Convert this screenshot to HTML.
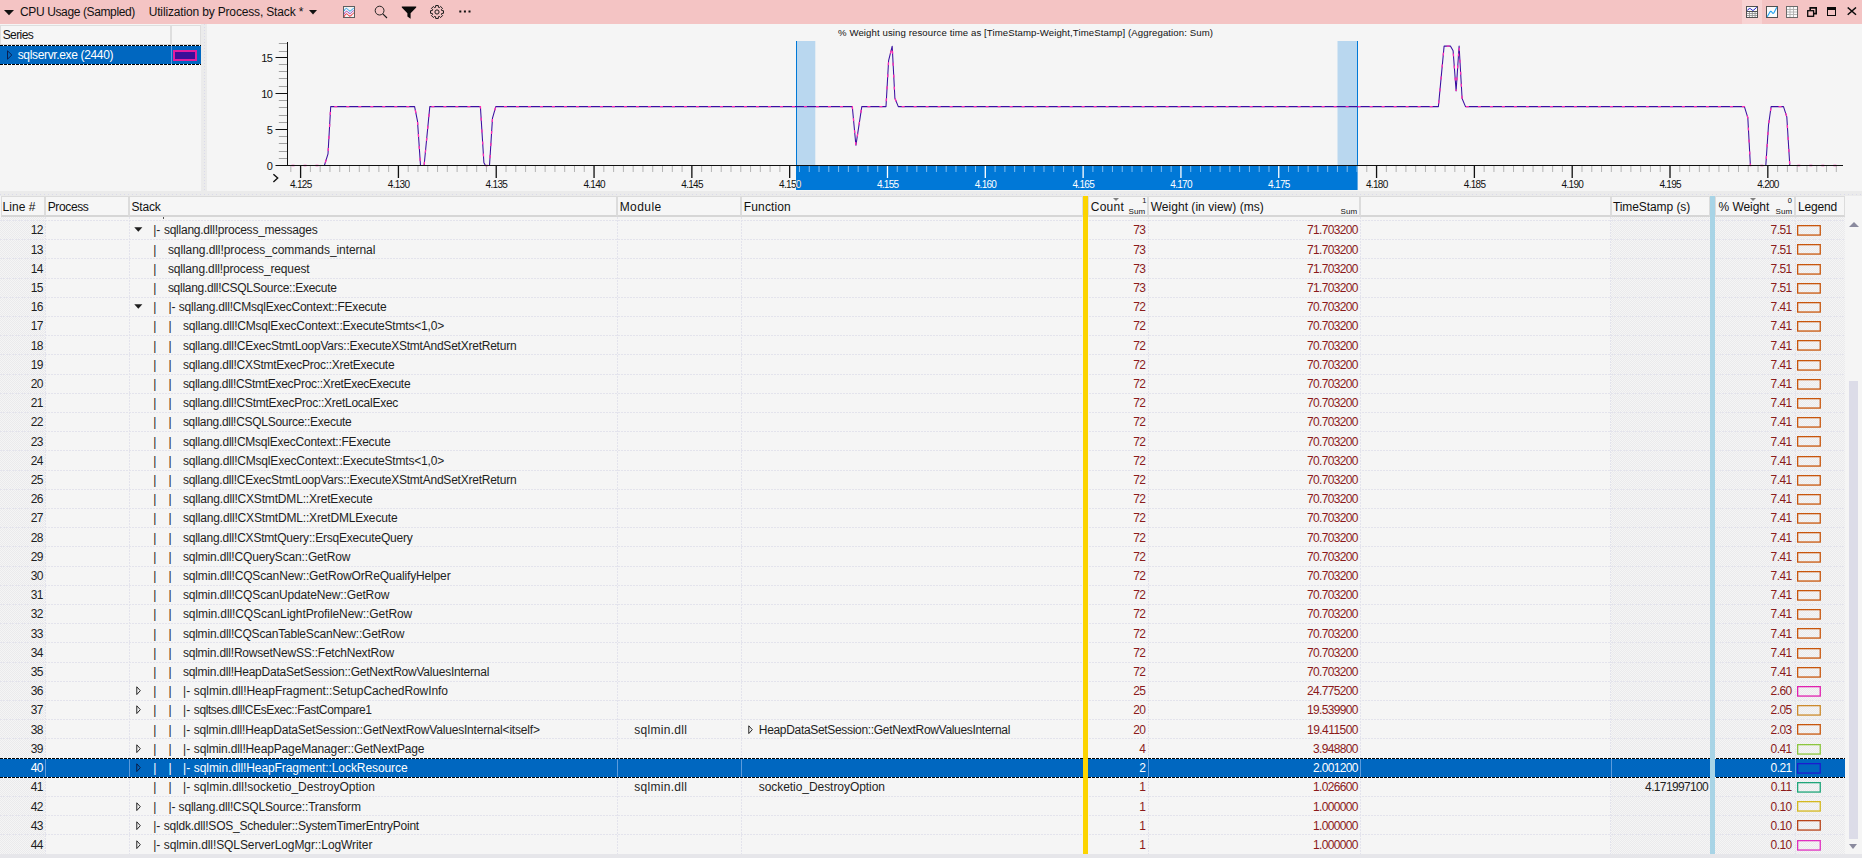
<!DOCTYPE html>
<html><head><meta charset="utf-8"><title>CPU Usage (Sampled)</title>
<style>
html,body{margin:0;padding:0}
body{width:1862px;height:858px;overflow:hidden;position:relative;background:#f5f5f5;font-family:"Liberation Sans",sans-serif;font-size:12px;color:#1e1e1e}
.abs{position:absolute}
i{display:block;font-style:normal}
#titlebar{position:absolute;left:0;top:0;width:1862px;height:24px;background:#f4c4c4}
#titlebar span{position:absolute;top:5px;font-size:12px;line-height:14px;white-space:pre;color:#111}
#titlebar svg{position:absolute}
#series{position:absolute;left:0;top:24px;width:201px;height:167px;background:#f5f5f5}
.shdr{position:absolute;top:1px;height:20px;background:#f6f6f6;border:1px solid #dedede;border-bottom:1px solid #d6d6d6;box-sizing:border-box}
#splitter{position:absolute;left:201px;top:24px;width:6px;height:167px;background:#ebebeb}
#hsplit{position:absolute;left:0;top:191px;width:1862px;height:5px;background:#ebebeb}
#thead{position:absolute;left:0;top:0;width:1862px;height:0}
.th{position:absolute;top:196px;height:21px;box-sizing:border-box;border:1px solid #dcdcdc;border-bottom:2px solid #d6d6d6;background:#f6f6f6}
.ht{position:absolute;top:200px;font-size:12px;line-height:14px;white-space:pre;color:#111}
.sum{position:absolute;top:206.5px;font-size:8px;line-height:9px;white-space:pre;color:#111}
.sidx{position:absolute;top:196.5px;font-size:7.5px;line-height:8px;color:#111}
.sarr{position:absolute;top:198.3px;width:0;height:0;border-left:3.7px solid transparent;border-right:3.7px solid transparent;border-top:3.4px solid #808080}
.row{position:absolute;left:0;width:1846px;height:19px}
.row.sel{background:#0067c0;left:0;width:1846px;height:20px}
.dl{position:absolute;left:0;width:100%;height:1px;background:repeating-linear-gradient(90deg,#000 0 3px,#fff 3px 4px)}
.row.sel .c{color:#fff !important;top:1px}
.row.sel .ex{top:5px}

.sv{position:absolute;top:1px;height:18px;width:1px;background:#5c9bdc}
.c{position:absolute;top:1px;line-height:19px;white-space:pre;font-size:12px}
.ln{color:#1e1e1e}
.st{color:#1e1e1e}
.num{color:#8b1a1a}
.lg{position:absolute;left:1797px;top:5px}
.ex{position:absolute;left:134.2px;top:5px;width:9px;height:9px}
.ex2{position:absolute;left:746.3px;top:5px;width:9px;height:9px}
.hl{position:absolute;left:0;width:1846px;height:1px;background:repeating-linear-gradient(90deg,#e3e3ec 0 2px,transparent 2px 3px)}
.vl{position:absolute;top:217px;height:637px;width:1px;background:repeating-linear-gradient(180deg,#e3e3ec 0 2px,transparent 2px 3px)}
.hatch{position:absolute;top:217px;height:637px;background:#eeeeee;background-image:conic-gradient(#eaeaec 25%,#f5f5f5 0 50%,#eaeaec 0 75%,#f5f5f5 0);background-size:2px 2px}
</style></head><body>

<div id="titlebar">
<svg style="left:4px;top:9.5px" width="10" height="6" viewBox="0 0 10 6"><path d="M0 0 L10 0 L5 5.2 Z" fill="#111"/></svg>
<span style="left:20.0px;letter-spacing:-0.376px">CPU Usage (Sampled)</span>
<span style="left:148.7px;letter-spacing:-0.158px">Utilization by Process, Stack *</span>
<svg style="left:309.3px;top:10px" width="8" height="5" viewBox="0 0 8 5"><path d="M0 0 L8 0 L4 4.4 Z" fill="#111"/></svg>
<svg style="left:343px;top:6px" width="12" height="12" viewBox="0 0 12 12"><rect x="0.5" y="0.5" width="11" height="11" fill="#f2f2f2" stroke="#5e5e5e"/><path d="M1.2 5 C2.2 2.2 3.6 1.6 5 3.6 S7.4 5.6 8.6 4 S10.2 2.6 10.8 2.4" fill="none" stroke="#1ea0f0" stroke-width="1"/><path d="M1.2 8.4 C2.2 5.2 3.6 4.6 5 6.2 S7.4 8 8.6 6.4 S10.2 4.8 10.8 4.6" fill="none" stroke="#a040c0" stroke-width="1"/><path d="M1.2 10.8 C2.2 7.8 3.6 7 5 8.8 S7.4 10.6 8.6 9 S10.2 7.2 10.8 7" fill="none" stroke="#f01020" stroke-width="1"/></svg>
<svg style="left:374px;top:5px" width="14" height="14" viewBox="0 0 14 14"><circle cx="5.6" cy="5.6" r="4.4" fill="none" stroke="#1a1a1a" stroke-width="0.95"/><path d="M8.8 8.8 L13 13" stroke="#1a1a1a" stroke-width="1.1" fill="none"/></svg>
<svg style="left:401px;top:6px" width="16" height="13" viewBox="0 0 16 13"><path d="M0.8 0.4 L15.2 0.4 L15.2 1.5 L9.6 7.2 L9.6 12.8 L6.4 10.4 L6.4 7.2 L0.8 1.5 Z" fill="#0a0a0a"/></svg>
<svg style="left:430px;top:4.8px" width="14" height="14" viewBox="0 0 14 14"><g fill="none" stroke="#1a1a1a" stroke-width="1" stroke-linejoin="round"><circle cx="7" cy="7" r="2.1"/><path d="M5.55 2.32 L5.69 0.53 L8.31 0.53 L8.45 2.32 L9.29 2.67 L10.65 1.50 L12.50 3.35 L11.33 4.71 L11.68 5.55 L13.47 5.69 L13.47 8.31 L11.68 8.45 L11.33 9.29 L12.50 10.65 L10.65 12.50 L9.29 11.33 L8.45 11.68 L8.31 13.47 L5.69 13.47 L5.55 11.68 L4.71 11.33 L3.35 12.50 L1.50 10.65 L2.67 9.29 L2.32 8.45 L0.53 8.31 L0.53 5.69 L2.32 5.55 L2.67 4.71 L1.50 3.35 L3.35 1.50 L4.71 2.67 Z"/></g></svg>
<svg style="left:459px;top:10.2px" width="13" height="3" viewBox="0 0 13 3"><rect x="0.3" y="0.5" width="2" height="2" fill="#111"/><rect x="4.9" y="0.5" width="2" height="2" fill="#111"/><rect x="9.5" y="0.5" width="2" height="2" fill="#111"/></svg>
<div class="abs" style="left:1742px;top:0;width:20px;height:24px;background:#f8d3d3"></div>
<svg style="left:1746px;top:6px" width="12" height="12" viewBox="0 0 12 12"><rect x="0.5" y="0.5" width="11" height="11" fill="#fafafa" stroke="#505050"/><path d="M1 7.5 H11 M1 9.5 H11 M3.5 5.5 V11 M6.3 5.5 V11 M9.1 5.5 V11" stroke="#8a8a8a" stroke-width="0.8" fill="none"/><path d="M1 5.5 H11" stroke="#505050" stroke-width="1"/><path d="M1.2 4.4 L3.2 2.7 Q4 2.2 4.8 2.9 L6.2 4.2 Q7 4.7 7.8 4 L10.8 1.2" fill="none" stroke="#2424cc" stroke-width="1"/></svg>
<svg style="left:1766px;top:6px" width="12" height="12" viewBox="0 0 12 12"><rect x="0.5" y="0.5" width="11" height="11" fill="#fafafa" stroke="#505050"/><path d="M1.2 10.8 L3.8 6.2 Q4.8 4.6 5.8 6 L6.4 6.9 Q7.3 8 8.1 6.4 L10.8 1.2" fill="none" stroke="#1ea0f0" stroke-width="1.1"/></svg>
<svg style="left:1786px;top:6px" width="12" height="12" viewBox="0 0 12 12"><rect x="0.5" y="0.5" width="11" height="11" fill="#fafafa" stroke="#6a6a6a"/><path d="M1 3.5 H11 M1 6 H11 M1 8.5 H11 M4 1 V11 M7.5 1 V11" stroke="#b0b0b0" stroke-width="0.9" fill="none"/></svg>
<svg style="left:1807px;top:7px" width="10" height="10" viewBox="0 0 10 10"><path d="M3.2 3 V0.9 H9.2 V6.6 H7" fill="none" stroke="#0a0a0a" stroke-width="1.6"/><rect x="0.7" y="3.7" width="5.9" height="5.6" fill="none" stroke="#0a0a0a" stroke-width="1.3"/></svg>
<svg style="left:1827px;top:7px" width="10" height="9" viewBox="0 0 10 9" shape-rendering="crispEdges"><rect x="0.5" y="0.5" width="8" height="8" fill="none" stroke="#0a0a0a" stroke-width="1"/><rect x="0" y="0" width="9" height="2.6" fill="#0a0a0a"/></svg>
<svg style="left:1847px;top:7px" width="10" height="9" viewBox="0 0 10 9"><path d="M0.7 0.5 L9 7.7 M9 0.5 L0.7 7.7" stroke="#0a0a0a" stroke-width="1.5" fill="none"/></svg>

</div>

<div id="series">
<div class="shdr" style="left:0;width:171px"></div>
<div class="shdr" style="left:171px;width:30px"></div>
<span class="abs" style="top:4px;font-size:12px;line-height:14px;color:#111;white-space:pre;left:2.7px;letter-spacing:-0.586px">Series</span>
<div class="abs" id="ssel" style="left:0;top:21px;width:201px;height:20px;background:#0067c0"><i class="dl" style="top:0"></i><i class="dl" style="top:19px"></i>
<svg class="abs" style="left:7px;top:5px" width="6" height="10" viewBox="0 0 6 10"><path d="M0.5 0.8 L4.8 5 L0.5 9.2 Z" fill="none" stroke="#0a1e50" stroke-width="1"/></svg>
<span class="abs" style="top:2.5px;color:#fff;font-size:12px;line-height:14px;white-space:pre;left:17.7px;letter-spacing:-0.345px">sqlservr.exe (2440)</span>
<div class="abs" style="left:170.5px;top:1px;width:1px;height:18px;background:#5c9bdc"></div>
<div class="abs" style="left:173px;top:5px;width:24px;height:11px;box-sizing:border-box;border:2px solid #e31ca0;background:#3b0f99"></div>
</div>
</div>
<div id="splitter"><i class="abs" style="left:3px;top:0;width:1px;height:167px;background:repeating-linear-gradient(180deg,#dadaea 0 1px,transparent 1px 3px)"></i></div>
<div id="hsplit"><i class="abs" style="left:0;top:3px;width:1862px;height:1px;background:repeating-linear-gradient(90deg,#dadaea 0 1px,transparent 1px 4px)"></i></div>

<svg id="chart" class="abs" style="left:0;top:0" width="1862" height="192" viewBox="0 0 1862 192" font-family="Liberation Sans, sans-serif">
<rect x="797" y="41" width="18.3" height="125" fill="#b9d7ef"/>
<rect x="1337.5" y="41" width="19.5" height="125" fill="#b9d7ef"/>
<rect x="796" y="166" width="561.6" height="24" fill="#0078d7"/>
<rect x="796" y="41" width="1" height="125" fill="#0078d7"/>
<rect x="1357" y="41" width="1" height="125" fill="#0078d7"/>
<rect x="275.5" y="165" width="12" height="1" fill="#111"/>
<rect x="278.8" y="158" width="8.5" height="1" fill="#a2a2a2"/>
<rect x="278.8" y="151" width="8.5" height="1" fill="#a2a2a2"/>
<rect x="278.8" y="143" width="8.5" height="1" fill="#a2a2a2"/>
<rect x="278.8" y="136" width="8.5" height="1" fill="#a2a2a2"/>
<rect x="275.5" y="129" width="12" height="1" fill="#111"/>
<rect x="278.8" y="122" width="8.5" height="1" fill="#a2a2a2"/>
<rect x="278.8" y="115" width="8.5" height="1" fill="#a2a2a2"/>
<rect x="278.8" y="107" width="8.5" height="1" fill="#a2a2a2"/>
<rect x="278.8" y="100" width="8.5" height="1" fill="#a2a2a2"/>
<rect x="275.5" y="93" width="12" height="1" fill="#111"/>
<rect x="278.8" y="86" width="8.5" height="1" fill="#a2a2a2"/>
<rect x="278.8" y="78" width="8.5" height="1" fill="#a2a2a2"/>
<rect x="278.8" y="71" width="8.5" height="1" fill="#a2a2a2"/>
<rect x="278.8" y="64" width="8.5" height="1" fill="#a2a2a2"/>
<rect x="275.5" y="57" width="12" height="1" fill="#111"/>
<rect x="278.8" y="51" width="8.5" height="1" fill="#a2a2a2"/>
<rect x="278.8" y="43" width="8.5" height="1" fill="#a2a2a2"/>
<text x="266.8" y="170.4" font-size="11" fill="#111">0</text>
<text x="266.8" y="134.3" font-size="11" fill="#111">5</text>
<text x="261.2" y="98.3" font-size="11" textLength="11.6" lengthAdjust="spacing" fill="#111">10</text>
<text x="261.2" y="62.2" font-size="11" textLength="11.6" lengthAdjust="spacing" fill="#111">15</text>
<rect x="290.32" y="166" width="1" height="6" fill="#b4b4b4"/>
<rect x="299.95" y="166" width="1.3" height="12" fill="#111"/>
<text x="301.1" y="188.3" font-size="10" text-anchor="middle" textLength="22.2" lengthAdjust="spacing" fill="#111">4.125</text>
<rect x="309.88" y="166" width="1" height="6" fill="#b4b4b4"/>
<rect x="319.66" y="166" width="1" height="6" fill="#b4b4b4"/>
<rect x="329.44" y="166" width="1" height="6" fill="#b4b4b4"/>
<rect x="339.23" y="166" width="1" height="6" fill="#b4b4b4"/>
<rect x="349.01" y="166" width="1" height="6" fill="#b4b4b4"/>
<rect x="358.79" y="166" width="1" height="6" fill="#b4b4b4"/>
<rect x="368.57" y="166" width="1" height="6" fill="#b4b4b4"/>
<rect x="378.35" y="166" width="1" height="6" fill="#b4b4b4"/>
<rect x="388.13" y="166" width="1" height="6" fill="#b4b4b4"/>
<rect x="397.77" y="166" width="1.3" height="12" fill="#111"/>
<text x="398.9" y="188.3" font-size="10" text-anchor="middle" textLength="22.2" lengthAdjust="spacing" fill="#111">4.130</text>
<rect x="407.70" y="166" width="1" height="6" fill="#b4b4b4"/>
<rect x="417.48" y="166" width="1" height="6" fill="#b4b4b4"/>
<rect x="427.26" y="166" width="1" height="6" fill="#b4b4b4"/>
<rect x="437.04" y="166" width="1" height="6" fill="#b4b4b4"/>
<rect x="446.82" y="166" width="1" height="6" fill="#b4b4b4"/>
<rect x="456.60" y="166" width="1" height="6" fill="#b4b4b4"/>
<rect x="466.39" y="166" width="1" height="6" fill="#b4b4b4"/>
<rect x="476.17" y="166" width="1" height="6" fill="#b4b4b4"/>
<rect x="485.95" y="166" width="1" height="6" fill="#b4b4b4"/>
<rect x="495.58" y="166" width="1.3" height="12" fill="#111"/>
<text x="496.7" y="188.3" font-size="10" text-anchor="middle" textLength="22.2" lengthAdjust="spacing" fill="#111">4.135</text>
<rect x="505.51" y="166" width="1" height="6" fill="#b4b4b4"/>
<rect x="515.29" y="166" width="1" height="6" fill="#b4b4b4"/>
<rect x="525.07" y="166" width="1" height="6" fill="#b4b4b4"/>
<rect x="534.86" y="166" width="1" height="6" fill="#b4b4b4"/>
<rect x="544.64" y="166" width="1" height="6" fill="#b4b4b4"/>
<rect x="554.42" y="166" width="1" height="6" fill="#b4b4b4"/>
<rect x="564.20" y="166" width="1" height="6" fill="#b4b4b4"/>
<rect x="573.98" y="166" width="1" height="6" fill="#b4b4b4"/>
<rect x="583.76" y="166" width="1" height="6" fill="#b4b4b4"/>
<rect x="593.40" y="166" width="1.3" height="12" fill="#111"/>
<text x="594.5" y="188.3" font-size="10" text-anchor="middle" textLength="22.2" lengthAdjust="spacing" fill="#111">4.140</text>
<rect x="603.33" y="166" width="1" height="6" fill="#b4b4b4"/>
<rect x="613.11" y="166" width="1" height="6" fill="#b4b4b4"/>
<rect x="622.89" y="166" width="1" height="6" fill="#b4b4b4"/>
<rect x="632.67" y="166" width="1" height="6" fill="#b4b4b4"/>
<rect x="642.45" y="166" width="1" height="6" fill="#b4b4b4"/>
<rect x="652.23" y="166" width="1" height="6" fill="#b4b4b4"/>
<rect x="662.02" y="166" width="1" height="6" fill="#b4b4b4"/>
<rect x="671.80" y="166" width="1" height="6" fill="#b4b4b4"/>
<rect x="681.58" y="166" width="1" height="6" fill="#b4b4b4"/>
<rect x="691.21" y="166" width="1.3" height="12" fill="#111"/>
<text x="692.4" y="188.3" font-size="10" text-anchor="middle" textLength="22.2" lengthAdjust="spacing" fill="#111">4.145</text>
<rect x="701.14" y="166" width="1" height="6" fill="#b4b4b4"/>
<rect x="710.92" y="166" width="1" height="6" fill="#b4b4b4"/>
<rect x="720.70" y="166" width="1" height="6" fill="#b4b4b4"/>
<rect x="730.49" y="166" width="1" height="6" fill="#b4b4b4"/>
<rect x="740.27" y="166" width="1" height="6" fill="#b4b4b4"/>
<rect x="750.05" y="166" width="1" height="6" fill="#b4b4b4"/>
<rect x="759.83" y="166" width="1" height="6" fill="#b4b4b4"/>
<rect x="769.61" y="166" width="1" height="6" fill="#b4b4b4"/>
<rect x="779.39" y="166" width="1" height="6" fill="#b4b4b4"/>
<rect x="789.02" y="166" width="1.3" height="12" fill="#111"/>
<text x="790.2" y="188.3" font-size="10" text-anchor="middle" textLength="22.2" lengthAdjust="spacing" fill="#111">4.150</text>
<clipPath id="cp"><rect x="796" y="166" width="30" height="24"/></clipPath>
<text x="790.2" y="188.3" font-size="10" text-anchor="middle" textLength="22.2" lengthAdjust="spacing" fill="#fff" clip-path="url(#cp)">4.150</text>
<rect x="798.96" y="166" width="1" height="6" fill="#7fbcee"/>
<rect x="808.74" y="166" width="1" height="6" fill="#7fbcee"/>
<rect x="818.52" y="166" width="1" height="6" fill="#7fbcee"/>
<rect x="828.30" y="166" width="1" height="6" fill="#7fbcee"/>
<rect x="838.08" y="166" width="1" height="6" fill="#7fbcee"/>
<rect x="847.86" y="166" width="1" height="6" fill="#7fbcee"/>
<rect x="857.65" y="166" width="1" height="6" fill="#7fbcee"/>
<rect x="867.43" y="166" width="1" height="6" fill="#7fbcee"/>
<rect x="877.21" y="166" width="1" height="6" fill="#7fbcee"/>
<rect x="886.84" y="166" width="1.3" height="12" fill="#fff"/>
<text x="888.0" y="188.3" font-size="10" text-anchor="middle" textLength="22.2" lengthAdjust="spacing" fill="#fff">4.155</text>
<rect x="896.77" y="166" width="1" height="6" fill="#7fbcee"/>
<rect x="906.55" y="166" width="1" height="6" fill="#7fbcee"/>
<rect x="916.33" y="166" width="1" height="6" fill="#7fbcee"/>
<rect x="926.12" y="166" width="1" height="6" fill="#7fbcee"/>
<rect x="935.90" y="166" width="1" height="6" fill="#7fbcee"/>
<rect x="945.68" y="166" width="1" height="6" fill="#7fbcee"/>
<rect x="955.46" y="166" width="1" height="6" fill="#7fbcee"/>
<rect x="965.24" y="166" width="1" height="6" fill="#7fbcee"/>
<rect x="975.02" y="166" width="1" height="6" fill="#7fbcee"/>
<rect x="984.65" y="166" width="1.3" height="12" fill="#fff"/>
<text x="985.8" y="188.3" font-size="10" text-anchor="middle" textLength="22.2" lengthAdjust="spacing" fill="#fff">4.160</text>
<rect x="994.59" y="166" width="1" height="6" fill="#7fbcee"/>
<rect x="1004.37" y="166" width="1" height="6" fill="#7fbcee"/>
<rect x="1014.15" y="166" width="1" height="6" fill="#7fbcee"/>
<rect x="1023.93" y="166" width="1" height="6" fill="#7fbcee"/>
<rect x="1033.71" y="166" width="1" height="6" fill="#7fbcee"/>
<rect x="1043.49" y="166" width="1" height="6" fill="#7fbcee"/>
<rect x="1053.28" y="166" width="1" height="6" fill="#7fbcee"/>
<rect x="1063.06" y="166" width="1" height="6" fill="#7fbcee"/>
<rect x="1072.84" y="166" width="1" height="6" fill="#7fbcee"/>
<rect x="1082.47" y="166" width="1.3" height="12" fill="#fff"/>
<text x="1083.6" y="188.3" font-size="10" text-anchor="middle" textLength="22.2" lengthAdjust="spacing" fill="#fff">4.165</text>
<rect x="1092.40" y="166" width="1" height="6" fill="#7fbcee"/>
<rect x="1102.18" y="166" width="1" height="6" fill="#7fbcee"/>
<rect x="1111.96" y="166" width="1" height="6" fill="#7fbcee"/>
<rect x="1121.75" y="166" width="1" height="6" fill="#7fbcee"/>
<rect x="1131.53" y="166" width="1" height="6" fill="#7fbcee"/>
<rect x="1141.31" y="166" width="1" height="6" fill="#7fbcee"/>
<rect x="1151.09" y="166" width="1" height="6" fill="#7fbcee"/>
<rect x="1160.87" y="166" width="1" height="6" fill="#7fbcee"/>
<rect x="1170.65" y="166" width="1" height="6" fill="#7fbcee"/>
<rect x="1180.28" y="166" width="1.3" height="12" fill="#fff"/>
<text x="1181.4" y="188.3" font-size="10" text-anchor="middle" textLength="22.2" lengthAdjust="spacing" fill="#fff">4.170</text>
<rect x="1190.22" y="166" width="1" height="6" fill="#7fbcee"/>
<rect x="1200.00" y="166" width="1" height="6" fill="#7fbcee"/>
<rect x="1209.78" y="166" width="1" height="6" fill="#7fbcee"/>
<rect x="1219.56" y="166" width="1" height="6" fill="#7fbcee"/>
<rect x="1229.34" y="166" width="1" height="6" fill="#7fbcee"/>
<rect x="1239.12" y="166" width="1" height="6" fill="#7fbcee"/>
<rect x="1248.91" y="166" width="1" height="6" fill="#7fbcee"/>
<rect x="1258.69" y="166" width="1" height="6" fill="#7fbcee"/>
<rect x="1268.47" y="166" width="1" height="6" fill="#7fbcee"/>
<rect x="1278.10" y="166" width="1.3" height="12" fill="#fff"/>
<text x="1279.2" y="188.3" font-size="10" text-anchor="middle" textLength="22.2" lengthAdjust="spacing" fill="#fff">4.175</text>
<rect x="1288.03" y="166" width="1" height="6" fill="#7fbcee"/>
<rect x="1297.81" y="166" width="1" height="6" fill="#7fbcee"/>
<rect x="1307.59" y="166" width="1" height="6" fill="#7fbcee"/>
<rect x="1317.38" y="166" width="1" height="6" fill="#7fbcee"/>
<rect x="1327.16" y="166" width="1" height="6" fill="#7fbcee"/>
<rect x="1336.94" y="166" width="1" height="6" fill="#7fbcee"/>
<rect x="1346.72" y="166" width="1" height="6" fill="#7fbcee"/>
<rect x="1356.50" y="166" width="1" height="6" fill="#7fbcee"/>
<rect x="1366.28" y="166" width="1" height="6" fill="#b4b4b4"/>
<rect x="1375.91" y="166" width="1.3" height="12" fill="#111"/>
<text x="1377.1" y="188.3" font-size="10" text-anchor="middle" textLength="22.2" lengthAdjust="spacing" fill="#111">4.180</text>
<rect x="1385.85" y="166" width="1" height="6" fill="#b4b4b4"/>
<rect x="1395.63" y="166" width="1" height="6" fill="#b4b4b4"/>
<rect x="1405.41" y="166" width="1" height="6" fill="#b4b4b4"/>
<rect x="1415.19" y="166" width="1" height="6" fill="#b4b4b4"/>
<rect x="1424.97" y="166" width="1" height="6" fill="#b4b4b4"/>
<rect x="1434.75" y="166" width="1" height="6" fill="#b4b4b4"/>
<rect x="1444.54" y="166" width="1" height="6" fill="#b4b4b4"/>
<rect x="1454.32" y="166" width="1" height="6" fill="#b4b4b4"/>
<rect x="1464.10" y="166" width="1" height="6" fill="#b4b4b4"/>
<rect x="1473.73" y="166" width="1.3" height="12" fill="#111"/>
<text x="1474.9" y="188.3" font-size="10" text-anchor="middle" textLength="22.2" lengthAdjust="spacing" fill="#111">4.185</text>
<rect x="1483.66" y="166" width="1" height="6" fill="#b4b4b4"/>
<rect x="1493.44" y="166" width="1" height="6" fill="#b4b4b4"/>
<rect x="1503.22" y="166" width="1" height="6" fill="#b4b4b4"/>
<rect x="1513.01" y="166" width="1" height="6" fill="#b4b4b4"/>
<rect x="1522.79" y="166" width="1" height="6" fill="#b4b4b4"/>
<rect x="1532.57" y="166" width="1" height="6" fill="#b4b4b4"/>
<rect x="1542.35" y="166" width="1" height="6" fill="#b4b4b4"/>
<rect x="1552.13" y="166" width="1" height="6" fill="#b4b4b4"/>
<rect x="1561.91" y="166" width="1" height="6" fill="#b4b4b4"/>
<rect x="1571.55" y="166" width="1.3" height="12" fill="#111"/>
<text x="1572.7" y="188.3" font-size="10" text-anchor="middle" textLength="22.2" lengthAdjust="spacing" fill="#111">4.190</text>
<rect x="1581.48" y="166" width="1" height="6" fill="#b4b4b4"/>
<rect x="1591.26" y="166" width="1" height="6" fill="#b4b4b4"/>
<rect x="1601.04" y="166" width="1" height="6" fill="#b4b4b4"/>
<rect x="1610.82" y="166" width="1" height="6" fill="#b4b4b4"/>
<rect x="1620.60" y="166" width="1" height="6" fill="#b4b4b4"/>
<rect x="1630.38" y="166" width="1" height="6" fill="#b4b4b4"/>
<rect x="1640.17" y="166" width="1" height="6" fill="#b4b4b4"/>
<rect x="1649.95" y="166" width="1" height="6" fill="#b4b4b4"/>
<rect x="1659.73" y="166" width="1" height="6" fill="#b4b4b4"/>
<rect x="1669.36" y="166" width="1.3" height="12" fill="#111"/>
<text x="1670.5" y="188.3" font-size="10" text-anchor="middle" textLength="22.2" lengthAdjust="spacing" fill="#111">4.195</text>
<rect x="1679.29" y="166" width="1" height="6" fill="#b4b4b4"/>
<rect x="1689.07" y="166" width="1" height="6" fill="#b4b4b4"/>
<rect x="1698.85" y="166" width="1" height="6" fill="#b4b4b4"/>
<rect x="1708.64" y="166" width="1" height="6" fill="#b4b4b4"/>
<rect x="1718.42" y="166" width="1" height="6" fill="#b4b4b4"/>
<rect x="1728.20" y="166" width="1" height="6" fill="#b4b4b4"/>
<rect x="1737.98" y="166" width="1" height="6" fill="#b4b4b4"/>
<rect x="1747.76" y="166" width="1" height="6" fill="#b4b4b4"/>
<rect x="1757.54" y="166" width="1" height="6" fill="#b4b4b4"/>
<rect x="1767.17" y="166" width="1.3" height="12" fill="#111"/>
<text x="1768.3" y="188.3" font-size="10" text-anchor="middle" textLength="22.2" lengthAdjust="spacing" fill="#111">4.200</text>
<rect x="1777.11" y="166" width="1" height="6" fill="#b4b4b4"/>
<rect x="1786.89" y="166" width="1" height="6" fill="#b4b4b4"/>
<rect x="1796.67" y="166" width="1" height="6" fill="#b4b4b4"/>
<rect x="1806.45" y="166" width="1" height="6" fill="#b4b4b4"/>
<rect x="1816.23" y="166" width="1" height="6" fill="#b4b4b4"/>
<rect x="1826.01" y="166" width="1" height="6" fill="#b4b4b4"/>
<rect x="1835.80" y="166" width="1" height="6" fill="#b4b4b4"/>
<polyline points="287.5,165.5 324.4,165.5 328.0,153.8 330.7,106.6 414.6,106.6 417.5,121.1 420.5,165.5 424.1,165.5 429.8,106.6 480.4,106.6 483.9,162.7 485.5,165.5 489.5,165.5 492.5,118.1 495.8,106.6 852.3,106.6 855.9,145.3 861.8,106.6 886.0,106.6 888.6,60.7 892.2,46.2 894.9,98.3 898.3,106.6 1438.4,106.6 1444.1,46.1 1450.4,46.1 1453.1,50.8 1456.1,90.9 1459.1,46.1 1462.1,98.5 1465.5,106.6 1744.4,106.6 1747.8,117.6 1750.4,165.5 1765.8,165.5 1768.5,125.3 1771.1,106.6 1783.5,106.6 1786.8,116.9 1789.8,165.5 1843.0,165.5" fill="none" stroke="#3a10a0" stroke-width="1.05" stroke-linejoin="round"/>
<polyline points="287.5,165.5 324.4,165.5 328.0,153.8 330.7,106.6 414.6,106.6 417.5,121.1 420.5,165.5 424.1,165.5 429.8,106.6 480.4,106.6 483.9,162.7 485.5,165.5 489.5,165.5 492.5,118.1 495.8,106.6 852.3,106.6 855.9,145.3 861.8,106.6 886.0,106.6 888.6,60.7 892.2,46.2 894.9,98.3 898.3,106.6 1438.4,106.6 1444.1,46.1 1450.4,46.1 1453.1,50.8 1456.1,90.9 1459.1,46.1 1462.1,98.5 1465.5,106.6 1744.4,106.6 1747.8,117.6 1750.4,165.5 1765.8,165.5 1768.5,125.3 1771.1,106.6 1783.5,106.6 1786.8,116.9 1789.8,165.5 1843.0,165.5" fill="none" stroke="#ff32b4" stroke-width="1.35" stroke-dasharray="3 9" stroke-dashoffset="-4"/>
<rect x="287" y="42" width="1" height="124" fill="#111"/>
<rect x="287" y="165" width="1556" height="1" fill="#111"/>
<path d="M273.4 174.2 L277.7 178.1 L273.4 182" fill="none" stroke="#111" stroke-width="1.4"/>
<text x="1025.5" y="36" font-size="9.6" text-anchor="middle" fill="#111" textLength="375" lengthAdjust="spacing">% Weight using resource time as [TimeStamp-Weight,TimeStamp] (Aggregation: Sum)</text>
</svg>

<div class="hatch" style="left:0;width:45px"></div>
<div class="hatch" style="left:1611px;width:234px"></div>
<div class="hl" style="top:220px"></div>
<div class="hl" style="top:239px"></div>
<div class="hl" style="top:258px"></div>
<div class="hl" style="top:278px"></div>
<div class="hl" style="top:297px"></div>
<div class="hl" style="top:316px"></div>
<div class="hl" style="top:335px"></div>
<div class="hl" style="top:354px"></div>
<div class="hl" style="top:374px"></div>
<div class="hl" style="top:393px"></div>
<div class="hl" style="top:412px"></div>
<div class="hl" style="top:431px"></div>
<div class="hl" style="top:450px"></div>
<div class="hl" style="top:470px"></div>
<div class="hl" style="top:489px"></div>
<div class="hl" style="top:508px"></div>
<div class="hl" style="top:527px"></div>
<div class="hl" style="top:546px"></div>
<div class="hl" style="top:566px"></div>
<div class="hl" style="top:585px"></div>
<div class="hl" style="top:604px"></div>
<div class="hl" style="top:623px"></div>
<div class="hl" style="top:642px"></div>
<div class="hl" style="top:662px"></div>
<div class="hl" style="top:681px"></div>
<div class="hl" style="top:700px"></div>
<div class="hl" style="top:719px"></div>
<div class="hl" style="top:738px"></div>
<div class="hl" style="top:758px"></div>
<div class="hl" style="top:777px"></div>
<div class="hl" style="top:796px"></div>
<div class="hl" style="top:815px"></div>
<div class="hl" style="top:834px"></div>
<div class="hl" style="top:854px"></div>
<div class="vl" style="left:45px"></div>
<div class="vl" style="left:129px"></div>
<div class="vl" style="left:617px"></div>
<div class="vl" style="left:741px"></div>
<div class="vl" style="left:1148px"></div>
<div class="vl" style="left:1360px"></div>
<div class="vl" style="left:1610px"></div>
<div class="vl" style="left:1795px"></div>

<div id="tbody">
<div class="row" style="top:220px">
<span class="c ln" style="right:1803.3px;letter-spacing:-0.680px;">12</span>
<svg class="ex" viewBox="0 0 10 10"><path d="M0.3 2.6 L9.3 2.6 L4.8 7.4 Z" fill="#1e1e1e"/></svg>
<span class="c st" style="left:153.2px">|-</span>
<span class="c st" style="left:163.9px;letter-spacing:-0.235px;">sqllang.dll!process_messages</span>
<span class="c num" style="right:700.7px;letter-spacing:-0.680px;">73</span>
<span class="c num" style="right:488.1px;letter-spacing:-0.637px;">71.703200</span>
<span class="c num" style="right:54.4px;letter-spacing:-0.590px;">7.51</span>
<svg class="lg" style="top:5px" width="25" height="12" viewBox="0 0 25 12"><rect x="0.65" y="0.65" width="22.6" height="9.4" fill="none" stroke="#c8560c" stroke-width="1.3"/></svg>
</div>
<div class="row" style="top:240px">
<span class="c ln" style="right:1803.3px;letter-spacing:-0.680px;">13</span>
<span class="c st" style="left:153.2px">|</span>
<span class="c st" style="left:167.9px;letter-spacing:-0.074px;">sqllang.dll!process_commands_internal</span>
<span class="c num" style="right:700.7px;letter-spacing:-0.680px;">73</span>
<span class="c num" style="right:488.1px;letter-spacing:-0.637px;">71.703200</span>
<span class="c num" style="right:54.4px;letter-spacing:-0.590px;">7.51</span>
<svg class="lg" style="top:4px" width="25" height="12" viewBox="0 0 25 12"><rect x="0.65" y="0.65" width="22.6" height="9.4" fill="none" stroke="#c8560c" stroke-width="1.3"/></svg>
</div>
<div class="row" style="top:259px">
<span class="c ln" style="right:1803.3px;letter-spacing:-0.680px;">14</span>
<span class="c st" style="left:153.2px">|</span>
<span class="c st" style="left:167.9px;letter-spacing:-0.142px;">sqllang.dll!process_request</span>
<span class="c num" style="right:700.7px;letter-spacing:-0.680px;">73</span>
<span class="c num" style="right:488.1px;letter-spacing:-0.637px;">71.703200</span>
<span class="c num" style="right:54.4px;letter-spacing:-0.590px;">7.51</span>
<svg class="lg" style="top:5px" width="25" height="12" viewBox="0 0 25 12"><rect x="0.65" y="0.65" width="22.6" height="9.4" fill="none" stroke="#c8560c" stroke-width="1.3"/></svg>
</div>
<div class="row" style="top:278px">
<span class="c ln" style="right:1803.3px;letter-spacing:-0.680px;">15</span>
<span class="c st" style="left:153.2px">|</span>
<span class="c st" style="left:167.9px;letter-spacing:-0.282px;">sqllang.dll!CSQLSource::Execute</span>
<span class="c num" style="right:700.7px;letter-spacing:-0.680px;">73</span>
<span class="c num" style="right:488.1px;letter-spacing:-0.637px;">71.703200</span>
<span class="c num" style="right:54.4px;letter-spacing:-0.590px;">7.51</span>
<svg class="lg" style="top:5px" width="25" height="12" viewBox="0 0 25 12"><rect x="0.65" y="0.65" width="22.6" height="9.4" fill="none" stroke="#c8560c" stroke-width="1.3"/></svg>
</div>
<div class="row" style="top:297px">
<span class="c ln" style="right:1803.3px;letter-spacing:-0.680px;">16</span>
<svg class="ex" viewBox="0 0 10 10"><path d="M0.3 2.6 L9.3 2.6 L4.8 7.4 Z" fill="#1e1e1e"/></svg>
<span class="c st" style="left:153.2px">|</span>
<span class="c st" style="left:168.5px">|-</span>
<span class="c st" style="left:178.8px;letter-spacing:-0.224px;">sqllang.dll!CMsqlExecContext::FExecute</span>
<span class="c num" style="right:700.7px;letter-spacing:-0.680px;">72</span>
<span class="c num" style="right:488.1px;letter-spacing:-0.637px;">70.703200</span>
<span class="c num" style="right:54.4px;letter-spacing:-0.590px;">7.41</span>
<svg class="lg" style="top:5px" width="25" height="12" viewBox="0 0 25 12"><rect x="0.65" y="0.65" width="22.6" height="9.4" fill="none" stroke="#c8560c" stroke-width="1.3"/></svg>
</div>
<div class="row" style="top:316px">
<span class="c ln" style="right:1803.3px;letter-spacing:-0.680px;">17</span>
<span class="c st" style="left:153.2px">|</span>
<span class="c st" style="left:168.5px">|</span>
<span class="c st" style="left:182.9px;letter-spacing:-0.192px;">sqllang.dll!CMsqlExecContext::ExecuteStmts&lt;1,0&gt;</span>
<span class="c num" style="right:700.7px;letter-spacing:-0.680px;">72</span>
<span class="c num" style="right:488.1px;letter-spacing:-0.637px;">70.703200</span>
<span class="c num" style="right:54.4px;letter-spacing:-0.590px;">7.41</span>
<svg class="lg" style="top:5px" width="25" height="12" viewBox="0 0 25 12"><rect x="0.65" y="0.65" width="22.6" height="9.4" fill="none" stroke="#c8560c" stroke-width="1.3"/></svg>
</div>
<div class="row" style="top:336px">
<span class="c ln" style="right:1803.3px;letter-spacing:-0.680px;">18</span>
<span class="c st" style="left:153.2px">|</span>
<span class="c st" style="left:168.5px">|</span>
<span class="c st" style="left:182.9px;letter-spacing:-0.234px;">sqllang.dll!CExecStmtLoopVars::ExecuteXStmtAndSetXretReturn</span>
<span class="c num" style="right:700.7px;letter-spacing:-0.680px;">72</span>
<span class="c num" style="right:488.1px;letter-spacing:-0.637px;">70.703200</span>
<span class="c num" style="right:54.4px;letter-spacing:-0.590px;">7.41</span>
<svg class="lg" style="top:4px" width="25" height="12" viewBox="0 0 25 12"><rect x="0.65" y="0.65" width="22.6" height="9.4" fill="none" stroke="#c8560c" stroke-width="1.3"/></svg>
</div>
<div class="row" style="top:355px">
<span class="c ln" style="right:1803.3px;letter-spacing:-0.680px;">19</span>
<span class="c st" style="left:153.2px">|</span>
<span class="c st" style="left:168.5px">|</span>
<span class="c st" style="left:182.9px;letter-spacing:-0.255px;">sqllang.dll!CXStmtExecProc::XretExecute</span>
<span class="c num" style="right:700.7px;letter-spacing:-0.680px;">72</span>
<span class="c num" style="right:488.1px;letter-spacing:-0.637px;">70.703200</span>
<span class="c num" style="right:54.4px;letter-spacing:-0.590px;">7.41</span>
<svg class="lg" style="top:5px" width="25" height="12" viewBox="0 0 25 12"><rect x="0.65" y="0.65" width="22.6" height="9.4" fill="none" stroke="#c8560c" stroke-width="1.3"/></svg>
</div>
<div class="row" style="top:374px">
<span class="c ln" style="right:1803.3px;letter-spacing:-0.680px;">20</span>
<span class="c st" style="left:153.2px">|</span>
<span class="c st" style="left:168.5px">|</span>
<span class="c st" style="left:182.9px;letter-spacing:-0.303px;">sqllang.dll!CStmtExecProc::XretExecExecute</span>
<span class="c num" style="right:700.7px;letter-spacing:-0.680px;">72</span>
<span class="c num" style="right:488.1px;letter-spacing:-0.637px;">70.703200</span>
<span class="c num" style="right:54.4px;letter-spacing:-0.590px;">7.41</span>
<svg class="lg" style="top:5px" width="25" height="12" viewBox="0 0 25 12"><rect x="0.65" y="0.65" width="22.6" height="9.4" fill="none" stroke="#c8560c" stroke-width="1.3"/></svg>
</div>
<div class="row" style="top:393px">
<span class="c ln" style="right:1803.3px;letter-spacing:-0.680px;">21</span>
<span class="c st" style="left:153.2px">|</span>
<span class="c st" style="left:168.5px">|</span>
<span class="c st" style="left:182.9px;letter-spacing:-0.256px;">sqllang.dll!CStmtExecProc::XretLocalExec</span>
<span class="c num" style="right:700.7px;letter-spacing:-0.680px;">72</span>
<span class="c num" style="right:488.1px;letter-spacing:-0.637px;">70.703200</span>
<span class="c num" style="right:54.4px;letter-spacing:-0.590px;">7.41</span>
<svg class="lg" style="top:5px" width="25" height="12" viewBox="0 0 25 12"><rect x="0.65" y="0.65" width="22.6" height="9.4" fill="none" stroke="#c8560c" stroke-width="1.3"/></svg>
</div>
<div class="row" style="top:412px">
<span class="c ln" style="right:1803.3px;letter-spacing:-0.680px;">22</span>
<span class="c st" style="left:153.2px">|</span>
<span class="c st" style="left:168.5px">|</span>
<span class="c st" style="left:182.9px;letter-spacing:-0.285px;">sqllang.dll!CSQLSource::Execute</span>
<span class="c num" style="right:700.7px;letter-spacing:-0.680px;">72</span>
<span class="c num" style="right:488.1px;letter-spacing:-0.637px;">70.703200</span>
<span class="c num" style="right:54.4px;letter-spacing:-0.590px;">7.41</span>
<svg class="lg" style="top:5px" width="25" height="12" viewBox="0 0 25 12"><rect x="0.65" y="0.65" width="22.6" height="9.4" fill="none" stroke="#c8560c" stroke-width="1.3"/></svg>
</div>
<div class="row" style="top:432px">
<span class="c ln" style="right:1803.3px;letter-spacing:-0.680px;">23</span>
<span class="c st" style="left:153.2px">|</span>
<span class="c st" style="left:168.5px">|</span>
<span class="c st" style="left:182.9px;letter-spacing:-0.226px;">sqllang.dll!CMsqlExecContext::FExecute</span>
<span class="c num" style="right:700.7px;letter-spacing:-0.680px;">72</span>
<span class="c num" style="right:488.1px;letter-spacing:-0.637px;">70.703200</span>
<span class="c num" style="right:54.4px;letter-spacing:-0.590px;">7.41</span>
<svg class="lg" style="top:4px" width="25" height="12" viewBox="0 0 25 12"><rect x="0.65" y="0.65" width="22.6" height="9.4" fill="none" stroke="#c8560c" stroke-width="1.3"/></svg>
</div>
<div class="row" style="top:451px">
<span class="c ln" style="right:1803.3px;letter-spacing:-0.680px;">24</span>
<span class="c st" style="left:153.2px">|</span>
<span class="c st" style="left:168.5px">|</span>
<span class="c st" style="left:182.9px;letter-spacing:-0.192px;">sqllang.dll!CMsqlExecContext::ExecuteStmts&lt;1,0&gt;</span>
<span class="c num" style="right:700.7px;letter-spacing:-0.680px;">72</span>
<span class="c num" style="right:488.1px;letter-spacing:-0.637px;">70.703200</span>
<span class="c num" style="right:54.4px;letter-spacing:-0.590px;">7.41</span>
<svg class="lg" style="top:5px" width="25" height="12" viewBox="0 0 25 12"><rect x="0.65" y="0.65" width="22.6" height="9.4" fill="none" stroke="#c8560c" stroke-width="1.3"/></svg>
</div>
<div class="row" style="top:470px">
<span class="c ln" style="right:1803.3px;letter-spacing:-0.680px;">25</span>
<span class="c st" style="left:153.2px">|</span>
<span class="c st" style="left:168.5px">|</span>
<span class="c st" style="left:182.9px;letter-spacing:-0.234px;">sqllang.dll!CExecStmtLoopVars::ExecuteXStmtAndSetXretReturn</span>
<span class="c num" style="right:700.7px;letter-spacing:-0.680px;">72</span>
<span class="c num" style="right:488.1px;letter-spacing:-0.637px;">70.703200</span>
<span class="c num" style="right:54.4px;letter-spacing:-0.590px;">7.41</span>
<svg class="lg" style="top:5px" width="25" height="12" viewBox="0 0 25 12"><rect x="0.65" y="0.65" width="22.6" height="9.4" fill="none" stroke="#c8560c" stroke-width="1.3"/></svg>
</div>
<div class="row" style="top:489px">
<span class="c ln" style="right:1803.3px;letter-spacing:-0.680px;">26</span>
<span class="c st" style="left:153.2px">|</span>
<span class="c st" style="left:168.5px">|</span>
<span class="c st" style="left:182.9px;letter-spacing:-0.171px;">sqllang.dll!CXStmtDML::XretExecute</span>
<span class="c num" style="right:700.7px;letter-spacing:-0.680px;">72</span>
<span class="c num" style="right:488.1px;letter-spacing:-0.637px;">70.703200</span>
<span class="c num" style="right:54.4px;letter-spacing:-0.590px;">7.41</span>
<svg class="lg" style="top:5px" width="25" height="12" viewBox="0 0 25 12"><rect x="0.65" y="0.65" width="22.6" height="9.4" fill="none" stroke="#c8560c" stroke-width="1.3"/></svg>
</div>
<div class="row" style="top:508px">
<span class="c ln" style="right:1803.3px;letter-spacing:-0.680px;">27</span>
<span class="c st" style="left:153.2px">|</span>
<span class="c st" style="left:168.5px">|</span>
<span class="c st" style="left:182.9px;letter-spacing:-0.169px;">sqllang.dll!CXStmtDML::XretDMLExecute</span>
<span class="c num" style="right:700.7px;letter-spacing:-0.680px;">72</span>
<span class="c num" style="right:488.1px;letter-spacing:-0.637px;">70.703200</span>
<span class="c num" style="right:54.4px;letter-spacing:-0.590px;">7.41</span>
<svg class="lg" style="top:5px" width="25" height="12" viewBox="0 0 25 12"><rect x="0.65" y="0.65" width="22.6" height="9.4" fill="none" stroke="#c8560c" stroke-width="1.3"/></svg>
</div>
<div class="row" style="top:528px">
<span class="c ln" style="right:1803.3px;letter-spacing:-0.680px;">28</span>
<span class="c st" style="left:153.2px">|</span>
<span class="c st" style="left:168.5px">|</span>
<span class="c st" style="left:182.9px;letter-spacing:-0.205px;">sqllang.dll!CXStmtQuery::ErsqExecuteQuery</span>
<span class="c num" style="right:700.7px;letter-spacing:-0.680px;">72</span>
<span class="c num" style="right:488.1px;letter-spacing:-0.637px;">70.703200</span>
<span class="c num" style="right:54.4px;letter-spacing:-0.590px;">7.41</span>
<svg class="lg" style="top:4px" width="25" height="12" viewBox="0 0 25 12"><rect x="0.65" y="0.65" width="22.6" height="9.4" fill="none" stroke="#c8560c" stroke-width="1.3"/></svg>
</div>
<div class="row" style="top:547px">
<span class="c ln" style="right:1803.3px;letter-spacing:-0.680px;">29</span>
<span class="c st" style="left:153.2px">|</span>
<span class="c st" style="left:168.5px">|</span>
<span class="c st" style="left:182.9px;letter-spacing:-0.161px;">sqlmin.dll!CQueryScan::GetRow</span>
<span class="c num" style="right:700.7px;letter-spacing:-0.680px;">72</span>
<span class="c num" style="right:488.1px;letter-spacing:-0.637px;">70.703200</span>
<span class="c num" style="right:54.4px;letter-spacing:-0.590px;">7.41</span>
<svg class="lg" style="top:5px" width="25" height="12" viewBox="0 0 25 12"><rect x="0.65" y="0.65" width="22.6" height="9.4" fill="none" stroke="#c8560c" stroke-width="1.3"/></svg>
</div>
<div class="row" style="top:566px">
<span class="c ln" style="right:1803.3px;letter-spacing:-0.680px;">30</span>
<span class="c st" style="left:153.2px">|</span>
<span class="c st" style="left:168.5px">|</span>
<span class="c st" style="left:182.9px;letter-spacing:-0.144px;">sqlmin.dll!CQScanNew::GetRowOrReQualifyHelper</span>
<span class="c num" style="right:700.7px;letter-spacing:-0.680px;">72</span>
<span class="c num" style="right:488.1px;letter-spacing:-0.637px;">70.703200</span>
<span class="c num" style="right:54.4px;letter-spacing:-0.590px;">7.41</span>
<svg class="lg" style="top:5px" width="25" height="12" viewBox="0 0 25 12"><rect x="0.65" y="0.65" width="22.6" height="9.4" fill="none" stroke="#c8560c" stroke-width="1.3"/></svg>
</div>
<div class="row" style="top:585px">
<span class="c ln" style="right:1803.3px;letter-spacing:-0.680px;">31</span>
<span class="c st" style="left:153.2px">|</span>
<span class="c st" style="left:168.5px">|</span>
<span class="c st" style="left:182.9px;letter-spacing:-0.151px;">sqlmin.dll!CQScanUpdateNew::GetRow</span>
<span class="c num" style="right:700.7px;letter-spacing:-0.680px;">72</span>
<span class="c num" style="right:488.1px;letter-spacing:-0.637px;">70.703200</span>
<span class="c num" style="right:54.4px;letter-spacing:-0.590px;">7.41</span>
<svg class="lg" style="top:5px" width="25" height="12" viewBox="0 0 25 12"><rect x="0.65" y="0.65" width="22.6" height="9.4" fill="none" stroke="#c8560c" stroke-width="1.3"/></svg>
</div>
<div class="row" style="top:604px">
<span class="c ln" style="right:1803.3px;letter-spacing:-0.680px;">32</span>
<span class="c st" style="left:153.2px">|</span>
<span class="c st" style="left:168.5px">|</span>
<span class="c st" style="left:182.9px;letter-spacing:-0.087px;">sqlmin.dll!CQScanLightProfileNew::GetRow</span>
<span class="c num" style="right:700.7px;letter-spacing:-0.680px;">72</span>
<span class="c num" style="right:488.1px;letter-spacing:-0.637px;">70.703200</span>
<span class="c num" style="right:54.4px;letter-spacing:-0.590px;">7.41</span>
<svg class="lg" style="top:5px" width="25" height="12" viewBox="0 0 25 12"><rect x="0.65" y="0.65" width="22.6" height="9.4" fill="none" stroke="#c8560c" stroke-width="1.3"/></svg>
</div>
<div class="row" style="top:624px">
<span class="c ln" style="right:1803.3px;letter-spacing:-0.680px;">33</span>
<span class="c st" style="left:153.2px">|</span>
<span class="c st" style="left:168.5px">|</span>
<span class="c st" style="left:182.9px;letter-spacing:-0.202px;">sqlmin.dll!CQScanTableScanNew::GetRow</span>
<span class="c num" style="right:700.7px;letter-spacing:-0.680px;">72</span>
<span class="c num" style="right:488.1px;letter-spacing:-0.637px;">70.703200</span>
<span class="c num" style="right:54.4px;letter-spacing:-0.590px;">7.41</span>
<svg class="lg" style="top:4px" width="25" height="12" viewBox="0 0 25 12"><rect x="0.65" y="0.65" width="22.6" height="9.4" fill="none" stroke="#c8560c" stroke-width="1.3"/></svg>
</div>
<div class="row" style="top:643px">
<span class="c ln" style="right:1803.3px;letter-spacing:-0.680px;">34</span>
<span class="c st" style="left:153.2px">|</span>
<span class="c st" style="left:168.5px">|</span>
<span class="c st" style="left:182.9px;letter-spacing:-0.215px;">sqlmin.dll!RowsetNewSS::FetchNextRow</span>
<span class="c num" style="right:700.7px;letter-spacing:-0.680px;">72</span>
<span class="c num" style="right:488.1px;letter-spacing:-0.637px;">70.703200</span>
<span class="c num" style="right:54.4px;letter-spacing:-0.590px;">7.41</span>
<svg class="lg" style="top:5px" width="25" height="12" viewBox="0 0 25 12"><rect x="0.65" y="0.65" width="22.6" height="9.4" fill="none" stroke="#c8560c" stroke-width="1.3"/></svg>
</div>
<div class="row" style="top:662px">
<span class="c ln" style="right:1803.3px;letter-spacing:-0.680px;">35</span>
<span class="c st" style="left:153.2px">|</span>
<span class="c st" style="left:168.5px">|</span>
<span class="c st" style="left:182.9px;letter-spacing:-0.224px;">sqlmin.dll!HeapDataSetSession::GetNextRowValuesInternal</span>
<span class="c num" style="right:700.7px;letter-spacing:-0.680px;">72</span>
<span class="c num" style="right:488.1px;letter-spacing:-0.637px;">70.703200</span>
<span class="c num" style="right:54.4px;letter-spacing:-0.590px;">7.41</span>
<svg class="lg" style="top:5px" width="25" height="12" viewBox="0 0 25 12"><rect x="0.65" y="0.65" width="22.6" height="9.4" fill="none" stroke="#c8560c" stroke-width="1.3"/></svg>
</div>
<div class="row" style="top:681px">
<span class="c ln" style="right:1803.3px;letter-spacing:-0.680px;">36</span>
<svg class="ex" viewBox="0 0 10 10"><path d="M3.1 0.9 L7 5.2 L3.1 9.5 Z" fill="none" stroke="#222" stroke-width="1.1"/></svg>
<span class="c st" style="left:153.2px">|</span>
<span class="c st" style="left:168.5px">|</span>
<span class="c st" style="left:183.1px">|-</span>
<span class="c st" style="left:193.8px;letter-spacing:-0.061px;">sqlmin.dll!HeapFragment::SetupCachedRowInfo</span>
<span class="c num" style="right:700.7px;letter-spacing:-0.680px;">25</span>
<span class="c num" style="right:488.1px;letter-spacing:-0.637px;">24.775200</span>
<span class="c num" style="right:54.4px;letter-spacing:-0.590px;">2.60</span>
<svg class="lg" style="top:5px" width="25" height="12" viewBox="0 0 25 12"><rect x="0.65" y="0.65" width="22.6" height="9.4" fill="none" stroke="#e020b0" stroke-width="1.3"/></svg>
</div>
<div class="row" style="top:700px">
<span class="c ln" style="right:1803.3px;letter-spacing:-0.680px;">37</span>
<svg class="ex" viewBox="0 0 10 10"><path d="M3.1 0.9 L7 5.2 L3.1 9.5 Z" fill="none" stroke="#222" stroke-width="1.1"/></svg>
<span class="c st" style="left:153.2px">|</span>
<span class="c st" style="left:168.5px">|</span>
<span class="c st" style="left:183.1px">|-</span>
<span class="c st" style="left:193.8px;letter-spacing:-0.412px;">sqltses.dll!CEsExec::FastCompare1</span>
<span class="c num" style="right:700.7px;letter-spacing:-0.680px;">20</span>
<span class="c num" style="right:488.1px;letter-spacing:-0.637px;">19.539900</span>
<span class="c num" style="right:54.4px;letter-spacing:-0.590px;">2.05</span>
<svg class="lg" style="top:5px" width="25" height="12" viewBox="0 0 25 12"><rect x="0.65" y="0.65" width="22.6" height="9.4" fill="none" stroke="#cc8a2c" stroke-width="1.3"/></svg>
</div>
<div class="row" style="top:720px">
<span class="c ln" style="right:1803.3px;letter-spacing:-0.680px;">38</span>
<span class="c st" style="left:153.2px">|</span>
<span class="c st" style="left:168.5px">|</span>
<span class="c st" style="left:183.1px">|-</span>
<span class="c st" style="left:193.8px;letter-spacing:-0.179px;">sqlmin.dll!HeapDataSetSession::GetNextRowValuesInternal&lt;itself&gt;</span>
<span class="c st" style="left:634.3px;letter-spacing:0.288px;">sqlmin.dll</span>
<svg class="ex2" viewBox="0 0 10 10"><path d="M3.1 0.9 L7 5.2 L3.1 9.5 Z" fill="none" stroke="#222" stroke-width="1.1"/></svg>
<span class="c st" style="left:758.8px;letter-spacing:-0.320px;">HeapDataSetSession::GetNextRowValuesInternal</span>
<span class="c num" style="right:700.7px;letter-spacing:-0.680px;">20</span>
<span class="c num" style="right:488.0px;letter-spacing:-0.538px;">19.411500</span>
<span class="c num" style="right:54.4px;letter-spacing:-0.590px;">2.03</span>
<svg class="lg" style="top:4px" width="25" height="12" viewBox="0 0 25 12"><rect x="0.65" y="0.65" width="22.6" height="9.4" fill="none" stroke="#c8560c" stroke-width="1.3"/></svg>
</div>
<div class="row" style="top:739px">
<span class="c ln" style="right:1803.3px;letter-spacing:-0.680px;">39</span>
<svg class="ex" viewBox="0 0 10 10"><path d="M3.1 0.9 L7 5.2 L3.1 9.5 Z" fill="none" stroke="#222" stroke-width="1.1"/></svg>
<span class="c st" style="left:153.2px">|</span>
<span class="c st" style="left:168.5px">|</span>
<span class="c st" style="left:183.1px">|-</span>
<span class="c st" style="left:193.8px;letter-spacing:-0.142px;">sqlmin.dll!HeapPageManager::GetNextPage</span>
<span class="c num" style="right:700.7px;letter-spacing:-0.688px;">4</span>
<span class="c num" style="right:488.1px;letter-spacing:-0.633px;">3.948800</span>
<span class="c num" style="right:54.4px;letter-spacing:-0.590px;">0.41</span>
<svg class="lg" style="top:5px" width="25" height="12" viewBox="0 0 25 12"><rect x="0.65" y="0.65" width="22.6" height="9.4" fill="none" stroke="#8cc63f" stroke-width="1.3"/></svg>
</div>
<div class="row sel" style="top:758px">
<i class="dl" style="top:0"></i><i class="dl" style="top:19px"></i>
<i class="sv" style="left:45px"></i>
<i class="sv" style="left:129px"></i>
<i class="sv" style="left:617px"></i>
<i class="sv" style="left:741px"></i>
<i class="sv" style="left:1148px"></i>
<i class="sv" style="left:1360px"></i>
<i class="sv" style="left:1611px"></i>
<i class="sv" style="left:1795px"></i>
<span class="c ln" style="right:1803.3px;letter-spacing:-0.680px;">40</span>
<svg class="ex" viewBox="0 0 10 10"><path d="M3.1 0.9 L7 5.2 L3.1 9.5 Z" fill="none" stroke="#0a1840" stroke-width="1.1"/></svg>
<span class="c st" style="left:153.2px">|</span>
<span class="c st" style="left:168.5px">|</span>
<span class="c st" style="left:183.1px">|-</span>
<span class="c st" style="left:193.8px;letter-spacing:-0.083px;">sqlmin.dll!HeapFragment::LockResource</span>
<span class="c num" style="right:700.7px;letter-spacing:-0.688px;">2</span>
<span class="c num" style="right:488.1px;letter-spacing:-0.633px;">2.001200</span>
<span class="c num" style="right:54.4px;letter-spacing:-0.590px;">0.21</span>
<svg class="lg" style="top:5px" width="25" height="12" viewBox="0 0 25 12"><rect x="0.65" y="0.65" width="22.6" height="9.4" fill="none" stroke="#1c1cd0" stroke-width="1.3"/></svg>
</div>
<div class="row" style="top:777px">
<span class="c ln" style="right:1803.3px;letter-spacing:-0.680px;">41</span>
<span class="c st" style="left:153.2px">|</span>
<span class="c st" style="left:168.5px">|</span>
<span class="c st" style="left:183.1px">|-</span>
<span class="c st" style="left:193.8px;letter-spacing:0.011px;">sqlmin.dll!socketio_DestroyOption</span>
<span class="c st" style="left:634.3px;letter-spacing:0.288px;">sqlmin.dll</span>
<span class="c st" style="left:758.8px;letter-spacing:-0.059px;">socketio_DestroyOption</span>
<span class="c num" style="right:700.7px;letter-spacing:-0.688px;">1</span>
<span class="c num" style="right:488.1px;letter-spacing:-0.633px;">1.026600</span>
<span class="c st" style="right:137.9px;letter-spacing:-0.643px;left:auto;">4.171997100</span>
<span class="c num" style="right:54.2px;letter-spacing:-0.367px;">0.11</span>
<svg class="lg" style="top:5px" width="25" height="12" viewBox="0 0 25 12"><rect x="0.65" y="0.65" width="22.6" height="9.4" fill="none" stroke="#1fa67a" stroke-width="1.3"/></svg>
</div>
<div class="row" style="top:797px">
<span class="c ln" style="right:1803.3px;letter-spacing:-0.680px;">42</span>
<svg class="ex" viewBox="0 0 10 10"><path d="M3.1 0.9 L7 5.2 L3.1 9.5 Z" fill="none" stroke="#222" stroke-width="1.1"/></svg>
<span class="c st" style="left:153.2px">|</span>
<span class="c st" style="left:168.5px">|-</span>
<span class="c st" style="left:178.6px;letter-spacing:-0.188px;">sqllang.dll!CSQLSource::Transform</span>
<span class="c num" style="right:700.7px;letter-spacing:-0.688px;">1</span>
<span class="c num" style="right:488.1px;letter-spacing:-0.633px;">1.000000</span>
<span class="c num" style="right:54.4px;letter-spacing:-0.590px;">0.10</span>
<svg class="lg" style="top:4px" width="25" height="12" viewBox="0 0 25 12"><rect x="0.65" y="0.65" width="22.6" height="9.4" fill="none" stroke="#d4b820" stroke-width="1.3"/></svg>
</div>
<div class="row" style="top:816px">
<span class="c ln" style="right:1803.3px;letter-spacing:-0.680px;">43</span>
<svg class="ex" viewBox="0 0 10 10"><path d="M3.1 0.9 L7 5.2 L3.1 9.5 Z" fill="none" stroke="#222" stroke-width="1.1"/></svg>
<span class="c st" style="left:153.2px">|-</span>
<span class="c st" style="left:163.8px;letter-spacing:-0.213px;">sqldk.dll!SOS_Scheduler::SystemTimerEntryPoint</span>
<span class="c num" style="right:700.7px;letter-spacing:-0.688px;">1</span>
<span class="c num" style="right:488.1px;letter-spacing:-0.633px;">1.000000</span>
<span class="c num" style="right:54.4px;letter-spacing:-0.590px;">0.10</span>
<svg class="lg" style="top:4px" width="25" height="12" viewBox="0 0 25 12"><rect x="0.65" y="0.65" width="22.6" height="9.4" fill="none" stroke="#b8441a" stroke-width="1.3"/></svg>
</div>
<div class="row" style="top:835px">
<span class="c ln" style="right:1803.3px;letter-spacing:-0.680px;">44</span>
<svg class="ex" viewBox="0 0 10 10"><path d="M3.1 0.9 L7 5.2 L3.1 9.5 Z" fill="none" stroke="#222" stroke-width="1.1"/></svg>
<span class="c st" style="left:153.2px">|-</span>
<span class="c st" style="left:163.8px;letter-spacing:-0.091px;">sqlmin.dll!SQLServerLogMgr::LogWriter</span>
<span class="c num" style="right:700.7px;letter-spacing:-0.688px;">1</span>
<span class="c num" style="right:488.1px;letter-spacing:-0.633px;">1.000000</span>
<span class="c num" style="right:54.4px;letter-spacing:-0.590px;">0.10</span>
<svg class="lg" style="top:5px" width="25" height="12" viewBox="0 0 25 12"><rect x="0.65" y="0.65" width="22.6" height="9.4" fill="none" stroke="#e030c0" stroke-width="1.3"/></svg>
</div>
</div>

<div class="abs" style="left:1083px;top:196px;width:5px;height:658px;background:#fcd400"></div>
<div class="abs" style="left:1710px;top:196px;width:5px;height:658px;background:#a8d4e6"></div>

<div class="abs" id="desc" style="left:163px;top:217px;width:1px;height:2px;background:#555"></div>
<div id="thead">
<div class="th" style="left:1px;width:44px"></div>
<div class="th" style="left:45px;width:84px"></div>
<div class="th" style="left:129px;width:488px"></div>
<div class="th" style="left:617px;width:124px"></div>
<div class="th" style="left:741px;width:342px"></div>
<div class="th" style="left:1088px;width:60px"></div>
<div class="th" style="left:1148px;width:212px"></div>
<div class="th" style="left:1360px;width:251px"></div>
<div class="th" style="left:1611px;width:99px"></div>
<div class="th" style="left:1715px;width:80px"></div>
<div class="th" style="left:1795px;width:50px"></div>
<span class="ht" style="left:2.6px;letter-spacing:0.049px">Line #</span>
<span class="ht" style="left:47.7px;letter-spacing:-0.366px">Process</span>
<span class="ht" style="left:131.5px;letter-spacing:-0.163px">Stack</span>
<span class="ht" style="left:619.7px;letter-spacing:0.423px">Module</span>
<span class="ht" style="left:743.8px;letter-spacing:0.134px">Function</span>
<span class="ht" style="left:1090.8px;letter-spacing:0.234px">Count</span>
<span class="ht" style="left:1150.7px;letter-spacing:0.030px">Weight (in view) (ms)</span>
<span class="ht" style="left:1612.9px;letter-spacing:-0.072px">TimeStamp (s)</span>
<span class="ht" style="left:1718.5px;letter-spacing:-0.043px">% Weight</span>
<span class="ht" style="left:1797.9px;letter-spacing:-0.141px">Legend</span>
<i class="sarr" style="left:1112.6px"></i><span class="sidx" style="left:1142.3px">1</span><span class="sum" style="left:1128.4px;letter-spacing:0.182px">Sum</span>
<span class="sum" style="left:1340.6px;letter-spacing:0.049px">Sum</span>
<i class="sarr" style="left:1749.8px"></i><span class="sidx" style="left:1787.8px">0</span><span class="sum" style="left:1775.6px;letter-spacing:0.049px">Sum</span>
</div>

<div class="abs" id="vscroll" style="left:1845px;top:196px;width:17px;height:658px;background:#f5f5f5">
<div class="abs" style="left:3.5px;top:26.1px;width:0;height:0;border-left:5px solid transparent;border-right:5px solid transparent;border-bottom:5.2px solid #8a8a9e"></div>
<div class="abs" style="left:3.6px;top:648.1px;width:0;height:0;border-left:4.9px solid transparent;border-right:4.9px solid transparent;border-top:5.3px solid #8a8a9e"></div>
<div class="abs" style="left:4px;top:185px;width:9px;height:458px;background:#dcdce8"></div>
</div>
<div class="abs" style="left:0;top:854px;width:1862px;height:4px;background:#e6e6ea"></div>
</body></html>
